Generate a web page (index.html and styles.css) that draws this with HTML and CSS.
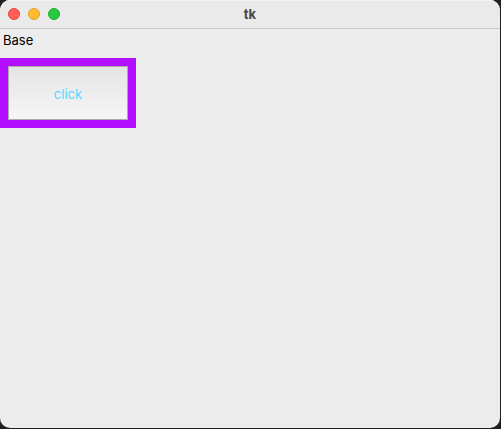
FILE: index.html
```html
<!DOCTYPE html>
<html lang="en">
<head>
  <meta charset="UTF-8" />
  <meta name="viewport" content="width=device-width, initial-scale=1.0" />
  <title>tk</title>
  <link rel="stylesheet" href="styles.css">
</head>
<body>

  <div class="window">
    <header class="titlebar">
      <div class="controls">
        <button class="control close" aria-label="Close"></button>
        <button class="control minimize" aria-label="Minimize"></button>
        <button class="control zoom" aria-label="Zoom"></button>
      </div>
      <h1>tk</h1>
    </header>

    <main class="content">
      <div class="label">Base</div>
      <div class="button-frame">
        <button class="click-button">click</button>
      </div>
    </main>
  </div>

</body>
</html>
```
FILE: styles.css
```css
* {
  box-sizing: border-box;
}

body {
  margin: 0;
  height: 100vh;
  padding: 0 1px 1px 0;
  background-color: #202020;
  color: #000;
  font-family: Inter, sans-serif;
  font-size: 13px;
}

.window {
  display: flex;
  flex-direction: column;
  height: 100%;
  background-color: #ececec;
  border-radius: 10px;
  overflow: hidden;
}

.titlebar {
  display: grid;
  grid-template-columns: 1fr auto 1fr;
  align-items: center;
  height: 29px;
  padding: 0 8px 2px;
  background-color: #eaeaea;
  border-top: 1px solid #f4f4f4;
  border-bottom: 1px solid #c6c6c6;
}

.titlebar h1 {
  margin: 0;
  font-size: 13px;
  line-height: 16px;
  font-weight: 700;
  color: #444;
}

.controls {
  display: flex;
  gap: 8px;
}

.control {
  width: 12px;
  height: 12px;
  padding: 0;
  border: 1px solid;
  border-radius: 50%;
}

.close {
  background-color: #ff5f57;
  border-color: #e2463f;
}

.minimize {
  background-color: #febc2e;
  border-color: #e0a028;
}

.zoom {
  background-color: #28c840;
  border-color: #1dac2c;
}

.content {
  flex: 1;
}

.label {
  height: 29px;
  padding: 3px;
  line-height: 16px;
}

.button-frame {
  width: 136px;
  padding: 8px;
  background-color: #b30fff;
}

.click-button {
  display: block;
  width: 100%;
  height: 54px;
  padding: 2px 0 0;
  border: 1px solid #aaa;
  background: linear-gradient(#e4e4e4, #f6f6f6);
  color: #5ad4ff;
  font-family: inherit;
  font-size: 13px;
}
```
